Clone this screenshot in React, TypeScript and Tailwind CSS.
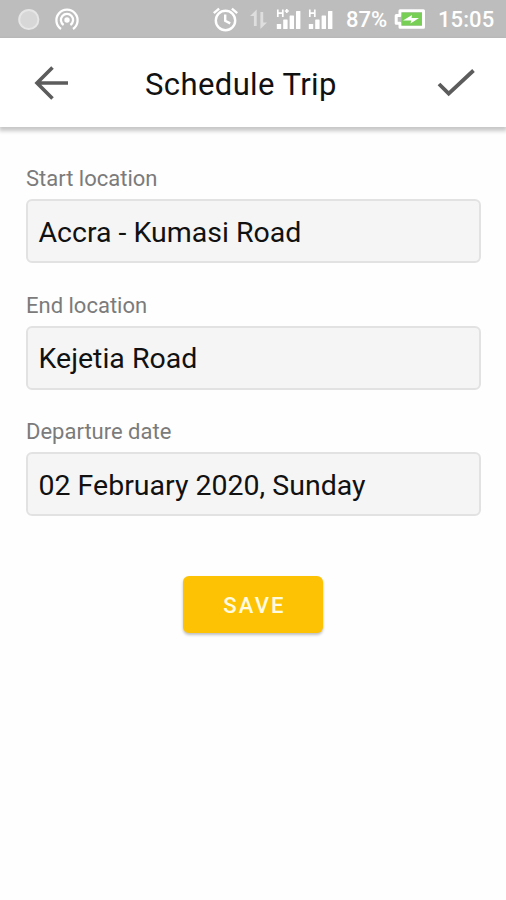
import React from 'react';

function Signal({ plus }: { plus?: boolean }) {
  return (
    <svg className="h-[22px] w-[26px]" viewBox="0 0 26 22" fill="#fff">
      <path
        d={plus ? 'M1.8 1.5v7.5M6.8 1.5v7.5M1.8 5.2h5M8.8 3h4M10.8 1v4' : 'M1.8 1.5v7.5M6.8 1.5v7.5M1.8 5.2h5'}
        stroke="#fff"
        strokeWidth="1.7"
        fill="none"
      />
      <rect x="0.8" y="16" width="4.4" height="5" rx="0.6" />
      <rect x="7.2" y="11.5" width="4.4" height="9.5" rx="0.6" />
      <rect x="13.6" y="7.5" width="4.4" height="13.5" rx="0.6" />
      <rect x="20" y="3" width="4.4" height="18" rx="0.6" />
    </svg>
  );
}

function StatusBar() {
  return (
    <div className="flex h-[38px] items-center bg-[#bdbdbd] pl-[16px] text-white">
      <svg className="h-6 w-6" viewBox="0 0 24 24">
        <circle cx="12.8" cy="12.5" r="9.6" fill="#d7d7d7" stroke="#e6e6e6" strokeWidth="2" />
      </svg>
      <svg className="ml-[14px] h-[26px] w-[26px]" viewBox="0 0 26 26" fill="none" stroke="#fff" strokeWidth="2.3">
        <path d="M7 23A10.6 10.6 0 1 1 19 23" />
        <path d="M9.6 19A6.1 6.1 0 1 1 16.4 19" />
        <circle cx="13" cy="14" r="2.7" fill="#fff" stroke="none" />
      </svg>
      <svg className="ml-[132px] h-[26px] w-[28px]" viewBox="0 0 28 26" fill="none" stroke="#fff" strokeWidth="2.4">
        <circle cx="13.5" cy="14.5" r="9.7" />
        <path d="M13.2 8.5v6.3l5 2.6M1.8 7.2l5.3-4.5M25.2 7.2l-5.3-4.5" />
      </svg>
      <svg className="ml-[9px] h-[22px] w-[20px]" viewBox="0 0 20 22" fill="#dedede">
        <path d="M1 8l6.7-6.5V18H4.9V8zM18 14.5L11.4 21V4h2.8v10.5z" />
      </svg>
      <div className="ml-[7px] flex gap-[6px]">
        <Signal plus />
        <Signal />
      </div>
      <span className="ml-[12px] w-[42px] whitespace-nowrap pt-[2px] font-[Roboto,sans-serif] text-[22px] font-medium leading-[36px]">87%</span>
      <svg className="ml-[5px] h-[22px] w-[34px]" viewBox="0 0 34 22">
        <path d="M7 2.7h23.5v16.6H7v-4H3.2V7.5H7z" fill="none" stroke="#fff" strokeWidth="3" strokeLinejoin="round" />
        <rect x="8.5" y="4.5" width="20.5" height="13" fill="#78cf55" />
        <path d="M10 12.4l9-5.4-.5 3h7.5L17.5 15.5l.8-3.1z" fill="#fff" />
      </svg>
      <span className="ml-[11px] whitespace-nowrap pt-[2px] font-[Roboto,sans-serif] text-[22px] font-medium leading-[36px] tracking-[0.1px]">15:05</span>
    </div>
  );
}

function Field({ label, value }: { label: string; value: string }) {
  return (
    <div className="h-[126.5px]">
      <label className="block h-[33px] text-[22px] leading-[26px] text-[#7b7b7b]">{label}</label>
      <div className="flex h-[64px] items-center rounded-md border-2 border-[#e2e2e2] bg-[#f5f5f5] pl-[10.5px] pt-[3px] text-[28.5px] leading-[34px] text-[#111]">
        {value}
      </div>
    </div>
  );
}

export default function App() {
  return (
    <div className="h-[900px] w-[506px] overflow-hidden bg-[#fefefe] font-[Roboto,sans-serif]">
      <StatusBar />
      <header className="flex h-[89px] items-center bg-white shadow-[0_3px_4px_1px_rgba(0,0,0,0.22)]">
        <svg className="ml-[33px] h-[36px] w-[36px]" viewBox="0 0 36 36" fill="none" stroke="#5c5c5c" strokeWidth="3.6">
          <path d="M35 18H4M19.5 2.5L4 18l15.5 15.5" />
        </svg>
        <h1 className="ml-[76px] w-[292px] pt-[4px] text-[31px] leading-[40px] tracking-[0.4px] text-[#111]">Schedule Trip</h1>
        <svg className="h-[32px] w-[38px]" viewBox="0 0 38 32" fill="none" stroke="#5c5c5c" strokeWidth="3.8">
          <path d="M2 17l9.7 9.7L36.5 3.5" />
        </svg>
      </header>
      <main className="px-[25px] pt-[39px]">
        <div className="pl-px">
          <Field label="Start location" value="Accra - Kumasi Road" />
          <Field label="End location" value="Kejetia Road" />
          <Field label="Departure date" value="02 February 2020, Sunday" />
        </div>
        <button className="mx-auto mt-[30px] flex h-[57px] w-[140px] items-center justify-center rounded-md bg-[#fcc203] pl-[3px] pt-[2px] text-[22px] font-medium tracking-[2.2px] text-[#fffbe0] shadow-[0_2px_3px_rgba(0,0,0,0.25)]">
          SAVE
        </button>
      </main>
    </div>
  );
}
